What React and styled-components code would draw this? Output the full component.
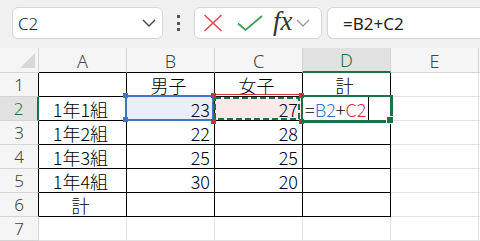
import styled, { createGlobalStyle } from "styled-components";

const GREEN = "#1e7145";
const BLUE = "#4472c4";
const RED = "#c8323f";

const GlobalStyle = createGlobalStyle`
  html, body { margin: 0; padding: 0; background: #fff; overflow: hidden; }
  body { font-family: "Noto Sans", "Liberation Sans", sans-serif; }
`;

const Page = styled.div`
  width: 480px;
  height: 241px;
  overflow: hidden;
`;

const FormulaBar = styled.div`
  height: 48px;
  box-sizing: border-box;
  padding: 7px 0 0 12px;
  background: #f0f0f0;
  display: flex;
  align-items: flex-start;
`;

const NameBox = styled.div`
  box-sizing: border-box;
  width: 151px;
  height: 32px;
  background: #fff;
  border: 1px solid #d6d6d6;
  border-radius: 6px;
  display: flex;
  align-items: center;
  justify-content: space-between;
  padding: 0 6px 0 5px;
  font-size: 17px;
  font-weight: 300;
  color: #222;
`;

const Dots = styled.div`
  width: 30px;
  height: 32px;
  display: flex;
  flex-direction: column;
  align-items: center;
  justify-content: center;
  gap: 3.5px;
  i {
    display: block;
    width: 3px;
    height: 3px;
    background: #555;
  }
`;

const FxGroup = styled.div`
  box-sizing: border-box;
  width: 128px;
  height: 32px;
  margin-left: 1px;
  background: #fff;
  border: 1px solid #d6d6d6;
  border-radius: 6px;
  display: flex;
  align-items: center;
  padding-left: 7px;
`;

const IconSlot = styled.div`
  width: ${(p) => p.$w}px;
  height: 30px;
  box-sizing: border-box;
  padding-left: ${(p) => p.$pad || 0}px;
  display: flex;
  align-items: center;
  justify-content: ${(p) => (p.$pad ? "flex-start" : "center")};
`;

const FxLabel = styled.span`
  font-family: "Liberation Serif", "DejaVu Serif", serif;
  font-style: italic;
  font-size: 27px;
  color: #333;
  margin-left: 9px;
  line-height: 1;
  margin-top: -3px;
`;

const FormulaInput = styled.div`
  flex: 1;
  box-sizing: border-box;
  height: 32px;
  margin-left: 5px;
  background: #fff;
  border: 1px solid #d6d6d6;
  border-right: none;
  border-radius: 6px 0 0 6px;
  display: flex;
  align-items: center;
  padding-left: 15px;
  font-size: 17px;
  color: #222;
`;

const Sheet = styled.div`
  display: grid;
  grid-template-columns: 39px repeat(5, 88px) 1fr;
  grid-template-rows: 25px repeat(7, 24px);
`;

const Corner = styled.div`
  box-sizing: border-box;
  background: #f5f5f5;
  border-right: 1px solid #d4d4d4;
  border-bottom: 1px solid #d4d4d4;
  position: relative;
`;

const ColHeader = styled.div`
  box-sizing: border-box;
  background: ${(p) => (p.$active ? "#e1e1e1" : "#f5f5f5")};
  color: ${(p) => (p.$active ? GREEN : "#444")};
  border-right: 1px solid #d4d4d4;
  border-bottom: ${(p) => (p.$active ? `2px solid ${GREEN}` : `1px solid ${p.$edge || "#d4d4d4"}`)};
  display: flex;
  align-items: center;
  justify-content: center;
  font-size: 18px;
  font-weight: 300;
  padding-top: 1px;
`;

const RowHeader = styled.div`
  box-sizing: border-box;
  background: ${(p) => (p.$active ? "#e1e1e1" : "#f5f5f5")};
  color: ${(p) => (p.$active ? GREEN : "#444")};
  border-bottom: 1px solid #d4d4d4;
  border-right: ${(p) => (p.$active ? `2px solid ${GREEN}` : `1px solid ${p.$edge || "#d4d4d4"}`)};
  display: flex;
  align-items: center;
  justify-content: center;
  font-size: 17px;
  font-weight: 300;
`;

const Cell = styled.div`
  position: relative;
  box-sizing: border-box;
  border-right: 1px solid ${(p) => p.$right};
  border-bottom: 1px solid ${(p) => p.$bottom};
  background: ${(p) => p.$fill || "#fff"};
  display: flex;
  align-items: center;
  justify-content: ${(p) => (p.$align === "right" ? "flex-end" : p.$align === "left" ? "flex-start" : "center")};
  padding: ${(p) => (p.$align === "left" ? "0 0 0 2px" : "0 4px 0 0")};
  font-family: "Noto Sans CJK JP", "Noto Sans", sans-serif;
  font-size: 18px;
  font-weight: 300;
  color: #000;
  white-space: nowrap;
`;

const RangeBox = styled.div`
  position: absolute;
  left: -2px;
  top: -2px;
  right: 0;
  bottom: -1px;
  border: 2px solid ${BLUE};
  pointer-events: none;
`;

const CopyBox = styled.div`
  position: absolute;
  left: -2px;
  top: -3px;
  width: 90px;
  height: 28px;
  box-sizing: border-box;
  border: 1px solid ${RED};
  pointer-events: none;
  svg {
    position: absolute;
    left: 0;
    top: 0;
  }
`;

const Handle = styled.span`
  position: absolute;
  width: 5px;
  height: 5px;
  background: ${(p) => p.$color};
  left: ${(p) => p.$x}px;
  top: ${(p) => p.$y}px;
  z-index: 2;
`;

const ActiveBox = styled.div`
  position: absolute;
  left: -2px;
  top: -2px;
  right: -3px;
  bottom: -3px;
  border-style: solid;
  border-color: ${GREEN};
  border-width: 2px 3px 3px 2px;
  pointer-events: none;
  z-index: 3;
`;

const FillHandle = styled.span`
  position: absolute;
  left: 83px;
  top: 19px;
  width: 6px;
  height: 6px;
  background: ${GREEN};
  border: 1px solid #fff;
  z-index: 4;
`;

const Ref = styled.span`
  color: ${(p) => p.$color};
`;

const Caret = styled.span`
  display: inline-block;
  width: 1px;
  height: 23px;
  background: #000;
  margin-left: 2px;
`;

const Chevron = ({ color = "#444", w = 14 }) => (
  <svg width={w} height="8" viewBox="0 0 14 8">
    <path d="M1 1 L7 7 L13 1" fill="none" stroke={color} strokeWidth="1.4" />
  </svg>
);

const cols = ["A", "B", "C", "D", "E", ""];

const data = [
  ["", "男子", "女子", "計", ""],
  ["1年1組", "23", "27", "", ""],
  ["1年2組", "22", "28", "", ""],
  ["1年3組", "25", "25", "", ""],
  ["1年4組", "30", "20", "", ""],
  ["計", "", "", "", ""],
  ["", "", "", "", ""],
];

function renderCell(r, c, value) {
  const inTable = r < 6 && c < 4;
  const right = inTable ? "#000" : "#e1e1e1";
  const bottom = inTable ? "#000" : "#e1e1e1";
  const numeric = value !== "" && !isNaN(Number(value));
  const key = `${r}-${c}`;

  if (r === 1 && c === 1) {
    return (
      <Cell key={key} $right={right} $bottom={bottom} $align="right" $fill="#e9eef8">
        {value}
        <RangeBox />
        <Handle $color={BLUE} $x={-4} $y={-4} />
        <Handle $color={BLUE} $x={-4} $y={20} />
      </Cell>
    );
  }
  if (r === 1 && c === 2) {
    return (
      <Cell key={key} $right={right} $bottom={bottom} $align="right" $fill="#f9e9e9">
        {value}
        <CopyBox>
          <svg width="88" height="26">
            <rect x="1" y="3" width="84" height="21" fill="none" stroke={GREEN} strokeWidth="2" strokeDasharray="6 3" />
          </svg>
        </CopyBox>
        <Handle $color={RED} $x={-4} $y={-4} />
        <Handle $color={RED} $x={-4} $y={22} />
        <Handle $color={RED} $x={84} $y={-4} />
        <Handle $color={RED} $x={84} $y={22} />
      </Cell>
    );
  }
  if (r === 1 && c === 3) {
    return (
      <Cell key={key} $right={right} $bottom={bottom} $align="left">
        =<Ref $color="#3b6fcf">B2</Ref>+<Ref $color={RED}>C2</Ref>
        <Caret />
        <ActiveBox />
        <FillHandle />
      </Cell>
    );
  }
  return (
    <Cell key={key} $right={right} $bottom={bottom} $align={numeric ? "right" : "center"}>
      {value}
    </Cell>
  );
}

export default function App() {
  return (
    <Page>
      <GlobalStyle />
      <FormulaBar>
        <NameBox>
          <span>C2</span>
          <Chevron />
        </NameBox>
        <Dots>
          <i />
          <i />
          <i />
        </Dots>
        <FxGroup>
          <IconSlot $w={22}>
            <svg width="20" height="18" viewBox="0 0 20 18">
              <path d="M1.5 1 L18.5 17 M18.5 1 L1.5 17" stroke="#e5484b" strokeWidth="1.6" fill="none" />
            </svg>
          </IconSlot>
          <IconSlot $w={40} $pad={13}>
            <svg width="26" height="16" viewBox="0 0 26 16">
              <path d="M1 8.5 L8.5 15 L25 1" stroke="#3aa052" strokeWidth="1.7" fill="none" />
            </svg>
          </IconSlot>
          <FxLabel>fx</FxLabel>
          <IconSlot $w={20}>
            <Chevron color="#9a9a9a" />
          </IconSlot>
        </FxGroup>
        <FormulaInput>=B2+C2</FormulaInput>
      </FormulaBar>

      <Sheet>
        <Corner>
          <svg width="38" height="24" style={{ position: "absolute", left: 0, top: 0 }}>
            <path d="M35 5 L35 20 L20 20 Z" fill="#d8d8d8" />
          </svg>
        </Corner>
        {cols.map((name, c) => (
          <ColHeader key={name || "F"} $active={c === 3} $edge={c < 3 ? "#000" : undefined}>
            {name}
          </ColHeader>
        ))}
        {data.map((row, r) => [
          <RowHeader key={`h${r}`} $active={r === 1} $edge={r < 6 ? "#000" : undefined}>
            {r + 1}
          </RowHeader>,
          ...row.map((value, c) => renderCell(r, c, value)),
          <Cell key={`f${r}`} $right="#e1e1e1" $bottom="#e1e1e1" />,
        ])}
      </Sheet>
    </Page>
  );
}
